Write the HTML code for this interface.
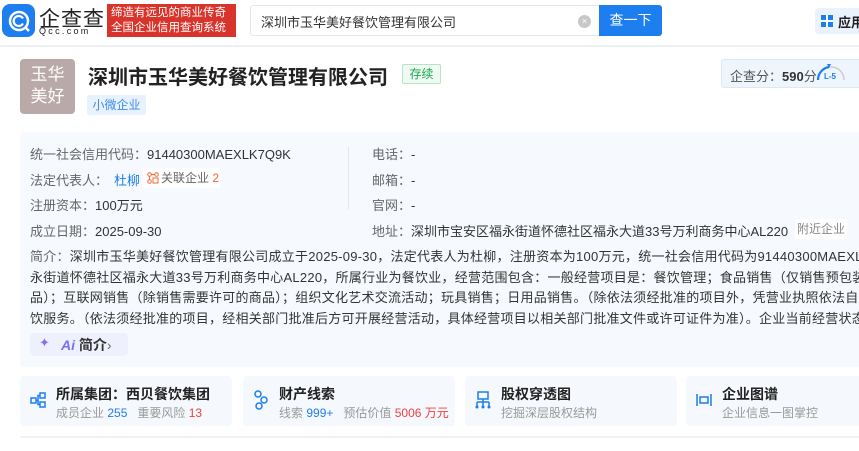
<!DOCTYPE html>
<html><head><meta charset="utf-8"><style>
*{margin:0;padding:0;box-sizing:border-box}
html,body{width:859px;height:451px;overflow:hidden}
body{background:#fff;font-family:"Liberation Sans","Noto Sans CJK SC",sans-serif;color:#333;position:relative}
.a{position:absolute;white-space:nowrap}
.hdr{position:absolute;left:0;top:0;width:859px;height:47px;border-bottom:2px solid #eef0f3;background:#fff}
.lbl{color:#666}
.f13{font-size:13px}
.card{position:absolute;top:376px;height:50px;width:212px;background:#f5f8fc;border-radius:4px;overflow:hidden}
.card .t{position:absolute;left:36px;top:8px;font-size:14px;font-weight:bold;color:#222}
.card .s{position:absolute;left:36px;top:28px;font-size:12px;color:#999}
</style></head><body>
<div class="hdr"></div>
<div class="a" style="left:2px;top:4px;width:33px;height:33px;border-radius:8px;background:#1d7ef0"></div>
<svg class="a" style="left:6px;top:8px" width="26" height="26" viewBox="0 0 26 26"><circle cx="13" cy="13" r="9" fill="none" stroke="#fff" stroke-width="2.5"/><path d="M17 10.5 A5 5 0 1 0 17 15.5" fill="none" stroke="#fff" stroke-width="2.2"/><path d="M19 19 L23 23" stroke="#fff" stroke-width="2.5"/></svg>
<div class="a" style="left:39px;top:3px;font-size:21px;color:#222;letter-spacing:1px">企查查</div>
<div class="a" style="left:39px;top:26px;font-size:9px;color:#222;letter-spacing:2.3px">Qcc.com</div>
<div class="a" style="left:107px;top:4px;width:129px;height:33px;background:#d9342b;color:#fff;font-size:11.5px;line-height:15px;padding:2px 0 0 4px">缔造有远见的商业传奇<br>全国企业信用查询系统</div>
<div class="a" style="left:250px;top:5px;width:350px;height:31px;border:1px solid #e2e5ea;border-radius:3px 0 0 3px;background:#fff"></div>
<div class="a f13" style="left:261px;top:12px;color:#333">深圳市玉华美好餐饮管理有限公司</div>
<div class="a" style="left:578px;top:15px;width:13px;height:13px;border-radius:50%;background:#c8c8c8;color:#fff;font-size:9px;line-height:13px;text-align:center">×</div>
<div class="a" style="left:599px;top:5px;width:63px;height:31px;background:#1d7ef0;border-radius:0 3px 3px 0;color:#fff;font-size:14px;line-height:31px;text-align:center">查一下</div>
<div class="a" style="left:815px;top:8px;width:44px;height:26px;background:#eaf2fd;border-radius:4px 0 0 4px;overflow:hidden"></div>
<div class="a" style="left:821px;top:15px;width:12px;height:12px;background:linear-gradient(#fff,#fff) 5px 0/2px 12px no-repeat,linear-gradient(#fff,#fff) 0 5px/12px 2px no-repeat,#1d7ef0"></div>
<div class="a" style="left:838px;top:12px;width:21px;overflow:hidden;font-size:13px;font-weight:bold;color:#222">应用</div>

<div class="a" style="left:20px;top:59px;width:55px;height:55px;background:#b9aaa9;border-radius:4px;color:#fff;font-size:17px;line-height:22px;text-align:center;padding-top:5px">玉华<br>美好</div>
<div class="a" style="left:88px;top:61px;font-size:20px;font-weight:bold;color:#222">深圳市玉华美好餐饮管理有限公司</div>
<div class="a" style="left:402px;top:64px;width:39px;height:20px;border:1px solid #b7e4c7;background:#eefaf2;color:#1ba84f;font-size:12px;line-height:18px;text-align:center;border-radius:2px">存续</div>
<div class="a" style="left:87px;top:95px;width:59px;height:20px;background:#e8f2fe;color:#3f8ae6;font-size:12px;line-height:20px;text-align:center;border-radius:2px">小微企业</div>
<div class="a" style="left:721px;top:59px;width:138px;height:29px;background:#eef5fd;border:1px solid #dbe8f8;border-right:none;border-radius:3px 0 0 3px"></div>
<div class="a f13" style="left:730px;top:66px;color:#555">企查分：<b style="color:#333">590</b>分</div>
<svg class="a" style="left:815px;top:62px" width="32" height="20" viewBox="0 0 32 20"><path d="M3 18 A13 13 0 0 1 14 5" fill="none" stroke="#1d7ef0" stroke-width="2.2"/><path d="M14 5 A13 13 0 0 1 29 18" fill="none" stroke="#ccc" stroke-width="1.5"/><path d="M12 2 L16 2 L14 6Z" fill="#1d7ef0"/><text x="9" y="17" font-size="8" font-weight="bold" fill="#1d7ef0" font-family="Liberation Sans">L-5</text></svg>

<div class="a" style="left:20px;top:132px;width:839px;height:235px;background:#f6f9fd;border-radius:4px 0 0 4px"></div>
<div class="a" style="left:348px;top:147px;width:1px;height:62px;background:#e3e7ec"></div>
<div class="a f13" style="left:30px;top:144px"><span class="lbl">统一社会信用代码：</span>91440300MAEXLK7Q9K</div>
<div class="a f13" style="left:30px;top:170px"><span class="lbl">法定代表人：</span><span style="color:#1d7ef0;margin-left:6px">杜柳</span></div>
<div class="a" style="left:143px;top:168px;width:77px;height:20px;background:#fff;border-radius:2px;font-size:12px;line-height:20px;padding-left:18px;color:#666">关联企业 <span style="color:#f5693a">2</span></div>
<svg class="a" style="left:147px;top:172px" width="12" height="12" viewBox="0 0 12 12"><circle cx="2.5" cy="2.5" r="1.8" fill="none" stroke="#f5693a"/><circle cx="9.5" cy="2.5" r="1.8" fill="none" stroke="#f5693a"/><circle cx="2.5" cy="9.5" r="1.8" fill="none" stroke="#f5693a"/><path d="M4 2.5H8M2.5 4V8M6 6H11V11H6Z" fill="none" stroke="#f5693a"/></svg>
<div class="a f13" style="left:30px;top:195px"><span class="lbl">注册资本：</span>100万元</div>
<div class="a f13" style="left:30px;top:221px"><span class="lbl">成立日期：</span>2025-09-30</div>
<div class="a f13" style="left:372px;top:144px"><span class="lbl">电话：</span>-</div>
<div class="a f13" style="left:372px;top:170px"><span class="lbl">邮箱：</span>-</div>
<div class="a f13" style="left:372px;top:195px"><span class="lbl">官网：</span>-</div>
<div class="a f13" style="left:372px;top:221px"><span class="lbl">地址：</span>深圳市宝安区福永街道怀德社区福永大道33号万利商务中心AL220</div>
<div class="a" style="left:795px;top:219px;width:52px;height:20px;background:#fff;color:#888;font-size:12px;line-height:20px;text-align:center">附近企业</div>
<div class="a" style="left:30px;top:247px;width:829px;height:80px;overflow:hidden">
<div class="f13" style="white-space:nowrap;line-height:20.5px;color:#333;letter-spacing:0.25px"><span class="lbl">简介：</span>深圳市玉华美好餐饮管理有限公司成立于2025-09-30，法定代表人为杜柳，注册资本为100万元，统一社会信用代码为91440300MAEXLK7Q9K，企业地址位于<br>永街道怀德社区福永大道33号万利商务中心AL220，所属行业为餐饮业，经营范围包含：一般经营项目是：餐饮管理；食品销售（仅销售预包装食<br>品）；互联网销售（除销售需要许可的商品）；组织文化艺术交流活动；玩具销售；日用品销售。（除依法须经批准的项目外，凭营业执照依法自主<br>饮服务。（依法须经批准的项目，经相关部门批准后方可开展经营活动，具体经营项目以相关部门批准文件或许可证件为准）。企业当前经营状态为存续。</div></div>
<div class="a" style="left:30px;top:333px;width:98px;height:23px;background:#eef0fd;border-radius:4px"></div>
<div class="a" style="left:39px;top:335px;font-size:13px;color:#8a6df0">✦</div>
<div class="a" style="left:61px;top:335px;font-size:14px;font-weight:bold;color:#7b6ef0"><i>Ai</i> <span style="color:#333">简介</span><span style="color:#666;font-weight:normal">›</span></div>

<div class="card" style="left:20px"><svg class="a" style="left:10px;top:16px" width="16" height="16" viewBox="0 0 16 16"><rect x="1" y="6" width="5" height="5" fill="none" stroke="#1d7ef0" stroke-width="1.5"/><rect x="10" y="1" width="5" height="5" fill="none" stroke="#1d7ef0" stroke-width="1.5"/><rect x="10" y="10" width="5" height="5" fill="none" stroke="#1d7ef0" stroke-width="1.5"/><path d="M6 8.5H8V3.5H10M8 8.5V12.5H10" fill="none" stroke="#1d7ef0" stroke-width="1.5"/></svg><div class="t">所属集团：西贝餐饮集团</div><div class="s">成员企业 <span style="color:#1d7ef0">255</span>&nbsp;&nbsp; 重要风险 <span style="color:#f04040">13</span></div></div>
<div class="card" style="left:243px"><svg class="a" style="left:11px;top:14px" width="14" height="20" viewBox="0 0 14 20"><circle cx="4" cy="4" r="3" fill="none" stroke="#1d7ef0" stroke-width="1.5"/><circle cx="10" cy="10" r="3" fill="none" stroke="#1d7ef0" stroke-width="1.5"/><circle cx="5" cy="16" r="3" fill="none" stroke="#1d7ef0" stroke-width="1.5"/></svg><div class="t">财产线索</div><div class="s">线索 <span style="color:#1d7ef0">999+</span>&nbsp;&nbsp; 预估价值 <span style="color:#f04040">5006 万元</span></div></div>
<div class="card" style="left:465px"><svg class="a" style="left:10px;top:15px" width="16" height="18" viewBox="0 0 16 18"><rect x="3" y="1" width="10" height="7" fill="none" stroke="#1d7ef0" stroke-width="1.5"/><path d="M8 8V11M2 11H14M2 11V15M8 11V15M14 11V15" fill="none" stroke="#1d7ef0" stroke-width="1.5"/><circle cx="2" cy="16" r="1.5" fill="#1d7ef0"/><circle cx="8" cy="16" r="1.5" fill="#1d7ef0"/><circle cx="14" cy="16" r="1.5" fill="#1d7ef0"/></svg><div class="t">股权穿透图</div><div class="s">挖掘深层股权结构</div></div>
<div class="card" style="left:686px;width:173px;border-radius:4px 0 0 4px"><svg class="a" style="left:10px;top:17px" width="16" height="14" viewBox="0 0 16 14"><path d="M1 1V13M15 1V13M4 4H12V10H4Z" fill="none" stroke="#1d7ef0" stroke-width="1.5"/></svg><div class="t">企业图谱</div><div class="s">企业信息一图掌控</div></div>
<div class="a" style="left:20px;top:436px;width:839px;height:2px;background:#f0f2f5"></div>
</body></html>
